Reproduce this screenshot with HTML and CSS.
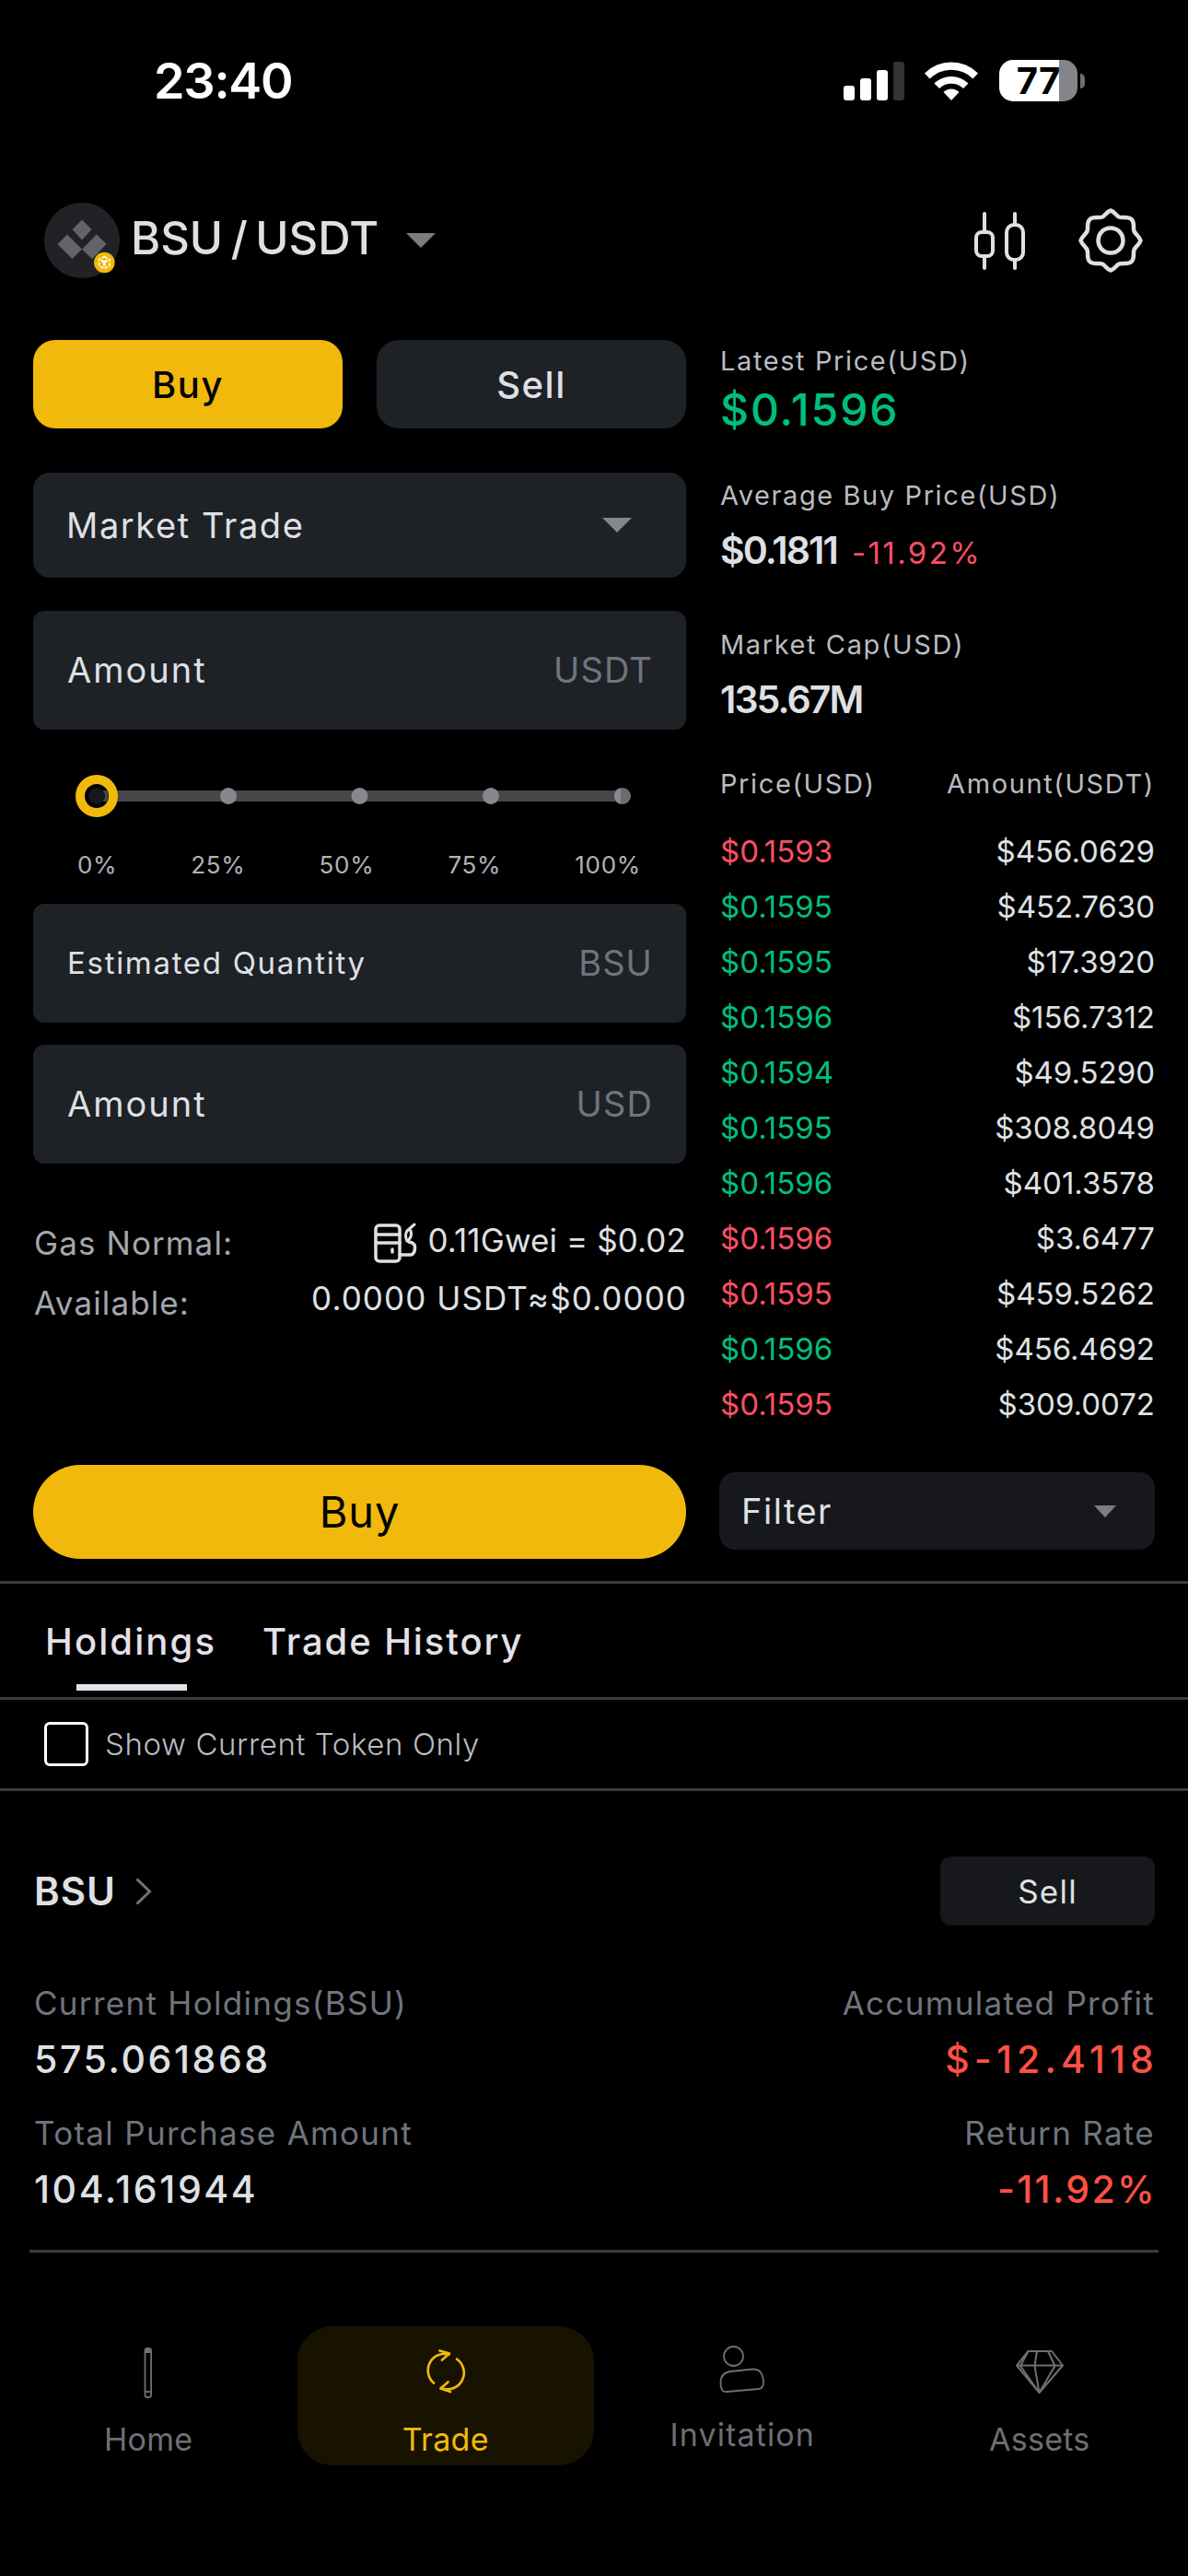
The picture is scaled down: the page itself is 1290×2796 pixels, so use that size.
FILE: index.html
```html
<!DOCTYPE html>
<html lang="en">
<head>
    <meta charset="UTF-8">
    <meta name="viewport" content="width=device-width, initial-scale=1.0">
    <title>BSU / USDT - Trade</title>
    <link rel="stylesheet" href="styles.css">
</head>
<body>
    <!-- Status bar -->
    <div class="status-bar">
        <span class="time">23:40</span>
        <div class="status-icons">
            <svg class="signal" width="66" height="42" viewBox="0 0 66 42">
                <rect x="0" y="26" width="12" height="16" rx="3" fill="#fff"/>
                <rect x="18" y="18" width="12" height="24" rx="3" fill="#fff"/>
                <rect x="36" y="9" width="12" height="33" rx="3" fill="#fff"/>
                <rect x="54" y="0" width="12" height="42" rx="3" fill="#333337"/>
            </svg>
            <svg class="wifi" width="58" height="42" viewBox="0 0 58 42">
                <path d="M0 12.5 A41 41 0 0 1 58 12.5 L52.5 18.5 A33.5 33.5 0 0 0 5.5 18.5 Z" fill="#fff"/>
                <path d="M10.5 23.5 A26.5 26.5 0 0 1 47.5 23.5 L42 29 A18.5 18.5 0 0 0 16 29 Z" fill="#fff"/>
                <path d="M29 42 L20.5 33 A12 12 0 0 1 37.5 33 Z" fill="#fff"/>
            </svg>
            <div class="battery"><span>77</span></div>
        </div>
    </div>

    <!-- Pair header -->
    <div class="header">
        <div class="pair">
            <svg class="token-logo" width="82" height="82" viewBox="0 0 82 82">
                <circle cx="41" cy="41" r="41" fill="#202226"/>
                <g fill="#636468">
                    <path d="M41 18.5 L51.5 29 L41 40.5 L30.5 29 Z"/>
                    <path d="M25 34.5 L41 50.5 L30.5 61 L14.5 45 Z"/>
                    <path d="M57 34.5 L67.5 45 L52 61 L41 50.5 Z"/>
                </g>
                <circle cx="65.3" cy="65" r="11.3" fill="#f1b90c"/>
                <g fill="none" stroke="#fff" stroke-width="1.6">
                    <path d="M65.3 58.5 L71 61.7 V68.3 L65.3 71.5 L59.6 68.3 V61.7 Z" stroke-dasharray="3.6 1.6"/>
                    <path d="M62 62.5 L65.3 64.5 L68.6 62.5 M65.3 64.5 V69" stroke-width="2.4"/>
                </g>
            </svg>
            <h1>BSU / USDT</h1>
            <svg class="caret" width="32" height="16" viewBox="0 0 32 16"><path d="M0 0 H32 L16 16 Z" fill="#7b7c80"/></svg>
        </div>
        <div class="header-actions">
            <svg width="56" height="64" viewBox="0 0 56 64" fill="none" stroke="#dfe0e4" stroke-width="4" stroke-linecap="round">
                <path d="M12 3 V22 M12 50 V62 M45 3 V15 M45 54 V62"/>
                <rect x="3" y="23" width="18" height="26" rx="6"/>
                <rect x="36" y="15" width="18" height="38" rx="8"/>
            </svg>
            <svg width="70" height="70" viewBox="0 0 70 70" fill="none" stroke="#dfe0e4" stroke-width="4.5" stroke-linejoin="round">
                <path d="M35 2.5 C39 3.5 41 8 44 9.5 C48 11 54 8.5 57.5 12 C61.5 15.5 59 21 60.5 25 C62 28.5 66.5 31 67.5 35 C66.5 39 62 41.5 60.5 45 C59 49 61.5 54.5 57.5 58 C54 61.5 48 59 44 60.5 C41 62 39 66.5 35 67.5 C31 66.5 29 62 26 60.5 C22 59 16 61.5 12.5 58 C8.5 54.5 11 49 9.5 45 C8 41.5 3.5 39 2.5 35 C3.5 31 8 28.5 9.5 25 C11 21 8.5 15.5 12.5 12 C16 8.5 22 11 26 9.5 C29 8 31 3.5 35 2.5 Z"/>
                <circle cx="35" cy="35" r="13.5"/>
            </svg>
        </div>
    </div>

    <!-- Trade panel -->
    <div class="trade-panel">
        <div class="order-form">
            <div class="side-switch">
                <button class="side active">Buy</button>
                <button class="side">Sell</button>
            </div>
            <div class="select">
                <span>Market Trade</span>
                <svg width="32" height="16" viewBox="0 0 32 16"><path d="M0 0 H32 L16 16 Z" fill="#86878b"/></svg>
            </div>
            <div class="field field-amount">
                <span>Amount</span>
                <span class="unit">USDT</span>
            </div>
            <div class="slider">
                <svg width="614" height="46" viewBox="0 0 614 46">
                    <rect x="29" y="17" width="563" height="12" fill="#48474c"/>
                    <g fill="#88878b">
                        <circle cx="166" cy="23" r="9"/>
                        <circle cx="308.5" cy="23" r="9"/>
                        <circle cx="451" cy="23" r="9"/>
                        <circle cx="594" cy="23" r="9" fill="#6c6b70"/>
                        <path d="M592 14.2 A9 9 0 0 0 592 31.8 Z"/>
                    </g>
                    <circle cx="23" cy="23" r="18" fill="#000" stroke="#f1b90c" stroke-width="10"/>
                    <path d="M30 17 H34 A13 13 0 0 1 34 29 H30 Z" fill="#48474c"/>
                    <circle cx="23" cy="23" r="9" fill="#17181c"/>
                </svg>
                <div class="slider-labels">
                    <span>0%</span><span>25%</span><span>50%</span><span>75%</span><span>100%</span>
                </div>
            </div>
            <div class="field">
                <span class="small">Estimated Quantity</span>
                <span class="unit">BSU</span>
            </div>
            <div class="field field-usd">
                <span>Amount</span>
                <span class="unit">USD</span>
            </div>
            <div class="info">
                <div class="info-row">
                    <span class="info-label">Gas Normal:</span>
                    <div class="info-value">
                        <svg width="47" height="44" viewBox="0 0 47 44" fill="none" stroke="#dfe0e4" stroke-width="3.5" stroke-linejoin="round" stroke-linecap="round">
                            <rect x="2" y="3" width="26" height="39" rx="4"/>
                            <path d="M2 13 H28 M2 22 H28"/>
                            <path d="M20 29 V32"/>
                            <path d="M28 35 H40 Q45 34 44.5 26 Q44 22 38 21"/>
                            <path d="M44 2 L36 9 Q33 14 36 20 Q42 16 40 9" stroke-width="3"/>
                        </svg>
                        <span class="gas">0.11Gwei = $0.02</span>
                    </div>
                </div>
                <div class="info-row">
                    <span class="info-label">Available:</span>
                    <span class="available">0.0000 USDT≈$0.0000</span>
                </div>
            </div>
            <button class="submit">Buy</button>
        </div>

        <div class="market">
            <div class="stat">
                <p class="label">Latest Price(USD)</p>
                <p class="price up">$0.1596</p>
            </div>
            <div class="stat">
                <p class="label">Average Buy Price(USD)</p>
                <p class="value"><b>$0.1811</b><span class="change down">-11.92%</span></p>
            </div>
            <div class="stat">
                <p class="label">Market Cap(USD)</p>
                <p class="value"><b>135.67M</b></p>
            </div>
            <div class="trades-head label"><span>Price(USD)</span><span>Amount(USDT)</span></div>
            <ul class="trades">
                <li><span class="down">$0.1593</span><span>$456.0629</span></li>
                <li><span class="up">$0.1595</span><span>$452.7630</span></li>
                <li><span class="up">$0.1595</span><span>$17.3920</span></li>
                <li><span class="up">$0.1596</span><span>$156.7312</span></li>
                <li><span class="up">$0.1594</span><span>$49.5290</span></li>
                <li><span class="up">$0.1595</span><span>$308.8049</span></li>
                <li><span class="up">$0.1596</span><span>$401.3578</span></li>
                <li><span class="down">$0.1596</span><span>$3.6477</span></li>
                <li><span class="down">$0.1595</span><span>$459.5262</span></li>
                <li><span class="up">$0.1596</span><span>$456.4692</span></li>
                <li><span class="down">$0.1595</span><span>$309.0072</span></li>
            </ul>
            <div class="filter">
                <span>Filter</span>
                <svg width="24" height="13" viewBox="0 0 24 13"><path d="M0 0 H24 L12 13 Z" fill="#7b7d82"/></svg>
            </div>
        </div>
    </div>

    <!-- Holdings -->
    <div class="tabs">
        <span class="tab active">Holdings</span>
        <span class="tab">Trade History</span>
    </div>
    <div class="token-only">
        <span class="checkbox"></span>
        <span>Show Current Token Only</span>
    </div>
    <div class="holding">
        <div class="holding-head">
            <div class="holding-name">
                <b>BSU</b>
                <svg width="18" height="30" viewBox="0 0 18 30"><path d="M1.5 1.5 L15.5 15 L1.5 28.5" fill="none" stroke="#70747d" stroke-width="3"/></svg>
            </div>
            <button class="holding-sell">Sell</button>
        </div>
        <div class="holding-row">
            <div>
                <p class="h-label">Current Holdings(BSU)</p>
                <p class="h-value">575.061868</p>
            </div>
            <div class="right">
                <p class="h-label">Accumulated Profit</p>
                <p class="h-value profit">$-12.4118</p>
            </div>
        </div>
        <div class="holding-row">
            <div>
                <p class="h-label">Total Purchase Amount</p>
                <p class="h-value">104.161944</p>
            </div>
            <div class="right">
                <p class="h-label">Return Rate</p>
                <p class="h-value rate">-11.92%</p>
            </div>
        </div>
    </div>

    <!-- Bottom navigation -->
    <div class="bottom-nav">
        <div class="nav-item">
            <svg width="60" height="60" viewBox="0 0 60 60" fill="none" stroke="#6f6f73" stroke-width="1.8">
                <rect x="26.5" y="4" width="6.6" height="53" rx="2.5"/>
                <path d="M27 5 H33 V9 H27 Z" fill="#6f6f73" stroke="none"/>
                <path d="M27 51 H33"/>
            </svg>
            <span>Home</span>
        </div>
        <div class="nav-item active">
            <svg width="60" height="60" viewBox="0 0 60 60" fill="none" stroke="#f1b90c" stroke-width="2.7" stroke-linecap="round" stroke-linejoin="round">
                <path d="M17 41.5 A18 18 0 0 1 33.5 10.5"/>
                <path d="M23.5 6.5 L34 9.5 L26 16.5"/>
                <path d="M42 15.5 A18 18 0 0 1 25 47"/>
                <path d="M32.5 40.5 L24.5 47.5 L35 51"/>
            </svg>
            <span>Trade</span>
        </div>
        <div class="nav-item invitation">
            <svg width="60" height="60" viewBox="0 0 60 60" fill="none" stroke="#6f6f73" stroke-width="1.8">
                <circle cx="20.5" cy="16.5" r="10.5"/>
                <path d="M17 33 Q6.5 34.5 6.5 45 Q6.5 56 13 55 L47.5 52 Q53 51.5 53 45 Q52.5 30 41.5 30.5 Z"/>
            </svg>
            <span>Invitation</span>
        </div>
        <div class="nav-item">
            <svg width="60" height="60" viewBox="0 0 60 60" fill="none" stroke="#6f6f73" stroke-width="2" stroke-linejoin="round">
                <path d="M17.5 7 H43 L55 22.5 L29.5 52 L5 22.5 Z"/>
                <path d="M5 22.5 H55 M17.5 7 L9 23 L29.5 52 M27 7 L24.5 23 L29.5 52 M39 7 L46.5 23 L29.5 52"/>
            </svg>
            <span>Assets</span>
        </div>
    </div>
</body>
</html>
```
FILE: styles.css
```css
* {
    margin: 0;
    padding: 0;
    box-sizing: border-box;
    font-family: Inter, Roboto, sans-serif;
}

body {
    width: 1290px;
    height: 2796px;
    overflow: hidden;
    background-color: #000;
    color: #dfe0e4;
}

svg {
    display: block;
    flex-shrink: 0;
}

button {
    border: none;
    color: inherit;
}

ul {
    list-style: none;
}

.up { color: #00bf7b; }
.down { color: #fb4f62; }

/* Status bar */
.status-bar {
    height: 175px;
    padding: 0 112px 0 167px;
    display: flex;
    justify-content: space-between;
    align-items: center;
    color: #fff;
}

.time {
    font-size: 54px;
    font-weight: 600;
    letter-spacing: -1.3px;
}

.status-icons {
    display: flex;
    align-items: center;
}

.signal { margin-right: 22px; }
.wifi { margin-right: 23px; }

.battery {
    position: relative;
    width: 85px;
    height: 45px;
    margin-right: 8px;
    border-radius: 15px;
    background: linear-gradient(to right, #fff 65px, #84848a 65px);
    color: #000;
    text-align: center;
}

.battery span {
    font-size: 40px;
    font-weight: 700;
    line-height: 45px;
}

.battery:after {
    content: "";
    position: absolute;
    right: -8px;
    top: 15px;
    width: 5px;
    height: 16px;
    border-radius: 0 5px 5px 0;
    background-color: #707075;
}

/* Header */
.header {
    height: 194px;
    padding: 45px 49px 0 48px;
    display: flex;
    justify-content: space-between;
    align-items: flex-start;
}

.pair {
    display: flex;
    align-items: center;
}

.pair h1 {
    margin-left: 12px;
    padding-bottom: 6px;
    font-size: 49px;
    font-weight: 550;
    letter-spacing: 0;
    word-spacing: -4.5px;
    white-space: nowrap;
}

.caret {
    margin-left: 30px;
}

.header-actions {
    height: 82px;
    display: flex;
    align-items: center;
    gap: 58px;
}

/* Trade panel */
.trade-panel {
    height: 1347px;
    padding: 0 36px;
    display: grid;
    grid-template-columns: 709px 473px;
    gap: 36px;
}

.side-switch {
    display: flex;
    gap: 37px;
}

.side {
    flex: 1;
    height: 96px;
    border-radius: 24px;
    background-color: #1e2126;
    font-size: 40px;
    font-weight: 450;
    letter-spacing: 1.5px;
}

.side.active {
    background-color: #f1b90c;
    color: #000;
}

.select {
    height: 114px;
    margin-top: 48px;
    padding: 0 59px 0 36px;
    border-radius: 18px;
    background-color: #1e2126;
    display: flex;
    justify-content: space-between;
    align-items: center;
    font-size: 38px;
    letter-spacing: 1.6px;
}

.field {
    height: 129px;
    padding: 0 36px 1px 37px;
    border-radius: 12px;
    background-color: #1e2126;
    display: flex;
    justify-content: space-between;
    align-items: center;
    font-size: 38px;
    font-weight: 400;
    letter-spacing: 2px;
}

.field .small {
    font-size: 33px;
    letter-spacing: 1.7px;
}

.field-amount { margin-top: 36px; }
.field-usd { margin-top: 24px; }

.field .unit {
    color: #70747d;
    letter-spacing: 1.1px;
}

.slider {
    height: 189px;
    padding: 49px 47px 0 46px;
}

.slider-labels {
    display: flex;
    justify-content: space-between;
    margin-top: 36px;
    padding: 0 2px;
    font-size: 26px;
    line-height: 32px;
    letter-spacing: 0.7px;
    color: #b0b2b8;
}

.info {
    padding-top: 53px;
    height: 327px;
}

.info-row {
    height: 65px;
    display: flex;
    justify-content: space-between;
    align-items: center;
    font-size: 35px;
}

.info-label {
    margin-left: 1px;
    color: #a5a7ad;
    letter-spacing: 1.1px;
}

.info-value {
    display: flex;
    align-items: center;
    gap: 12px;
}

.gas {
    margin-bottom: 6px;
    letter-spacing: 0.1px;
}

.available {
    margin: 0 -1px 10px 0;
    letter-spacing: 1.1px;
}

.submit {
    width: 100%;
    height: 102px;
    padding-bottom: 1px;
    border-radius: 51px;
    background-color: #f1b90c;
    color: #000;
    font-size: 47px;
    letter-spacing: 0.9px;
}

/* Market column */
.market {
    padding-top: 3px;
}

.label {
    margin-left: 1px;
    color: #b9bcc2;
    font-size: 29px;
    line-height: 40px;
    letter-spacing: 1.6px;
    white-space: nowrap;
}

.stat + .stat { margin-top: 44px; }
.stat + .stat + .stat { margin-top: 53px; }

.price {
    margin: 3px 0 0 1px;
    height: 59px;
    font-size: 48px;
    font-weight: 500;
    line-height: 59px;
    letter-spacing: 1.9px;
}

.value {
    height: 60px;
    margin-top: 9px;
    display: flex;
    align-items: baseline;
    font-size: 41px;
    line-height: 60px;
}

.value b {
    margin-left: 1px;
    font-weight: 600;
    letter-spacing: -1.9px;
}

.change {
    margin-left: 16px;
    font-size: 33px;
    letter-spacing: 2.4px;
}

.trades-head {
    margin: 42px 0 0 1px;
    display: flex;
    justify-content: space-between;
}

.trades {
    margin: 23px 0 44px 1px;
    font-size: 33px;
}

.trades li {
    height: 60px;
    display: flex;
    justify-content: space-between;
    align-items: center;
}

.filter {
    height: 84px;
    padding: 0 42px 0 24px;
    border-radius: 17px;
    background-color: #17181c;
    display: flex;
    justify-content: space-between;
    align-items: center;
    font-size: 38px;
    letter-spacing: 1.5px;
}

/* Tabs */
.tabs {
    height: 129px;
    padding-left: 49px;
    border-top: 3px solid #3c3b3f;
    border-bottom: 3px solid #3c3b3f;
    display: flex;
    gap: 50px;
    font-size: 40px;
    font-weight: 500;
    line-height: 125px;
    color: #e5e1e9;
    letter-spacing: 1.9px;
}

.tab {
    position: relative;
}

.tab.active {
    font-weight: 550;
    letter-spacing: 2.1px;
}

.tab.active:after {
    content: "";
    position: absolute;
    left: 34px;
    bottom: 7px;
    width: 120px;
    height: 7px;
    background-color: #e5e1e9;
}

.token-only {
    height: 99px;
    padding-left: 48px;
    border-bottom: 3px solid #3c3b3f;
    display: flex;
    align-items: center;
    gap: 18px;
    font-size: 33px;
    font-weight: 350;
    letter-spacing: 0.6px;
    color: #b9bcc2;
}

.checkbox {
    width: 48px;
    height: 48px;
    border: 3px solid #fff;
    border-radius: 6px;
}

/* Holding card */
.holding {
    height: 501px;
    margin: 0 32px;
    padding: 71px 4px 0 5px;
    border-bottom: 3px solid #3c3b3f;
}

.holding-head {
    display: flex;
    justify-content: space-between;
    align-items: center;
}

.holding-name {
    display: flex;
    align-items: center;
    gap: 21px;
    font-size: 42px;
    letter-spacing: 1px;
}

.holding-name b {
    font-weight: 600;
}

.holding-sell {
    width: 233px;
    height: 75px;
    border-radius: 12px;
    background-color: #17181c;
    font-size: 35px;
    letter-spacing: 1.2px;
}

.holding-row {
    height: 141px;
    display: flex;
    justify-content: space-between;
}

.holding-head + .holding-row {
    margin-top: 60px;
}

.h-label {
    color: #70747d;
    font-size: 35px;
    line-height: 48px;
    letter-spacing: 1.3px;
}

.h-value {
    margin-top: 7px;
    font-size: 41px;
    font-weight: 450;
    line-height: 60px;
    letter-spacing: 2.6px;
}

.right {
    text-align: right;
}

.right .h-value {
    color: #fd5045;
}

.right .profit {
    margin-right: -4px;
    letter-spacing: 5.1px;
}

.right .rate {
    margin-right: -2px;
    letter-spacing: 2.3px;
}

/* Bottom nav */
.bottom-nav {
    padding-top: 80px;
    display: grid;
    grid-template-columns: repeat(4, 1fr);
}

.nav-item {
    height: 151px;
    padding-top: 20px;
    border-radius: 38px;
    display: flex;
    flex-direction: column;
    align-items: center;
    font-size: 34px;
    line-height: 44px;
    color: #6f6f73;
    letter-spacing: 0.3px;
}

.nav-item span {
    margin-top: 21px;
}

.nav-item.active {
    background-color: #181301;
    color: #f1b90c;
}

.nav-item.invitation {
    padding-top: 16px;
    letter-spacing: 1.1px;
}

.nav-item.invitation span {
    margin-top: 20px;
}
```
